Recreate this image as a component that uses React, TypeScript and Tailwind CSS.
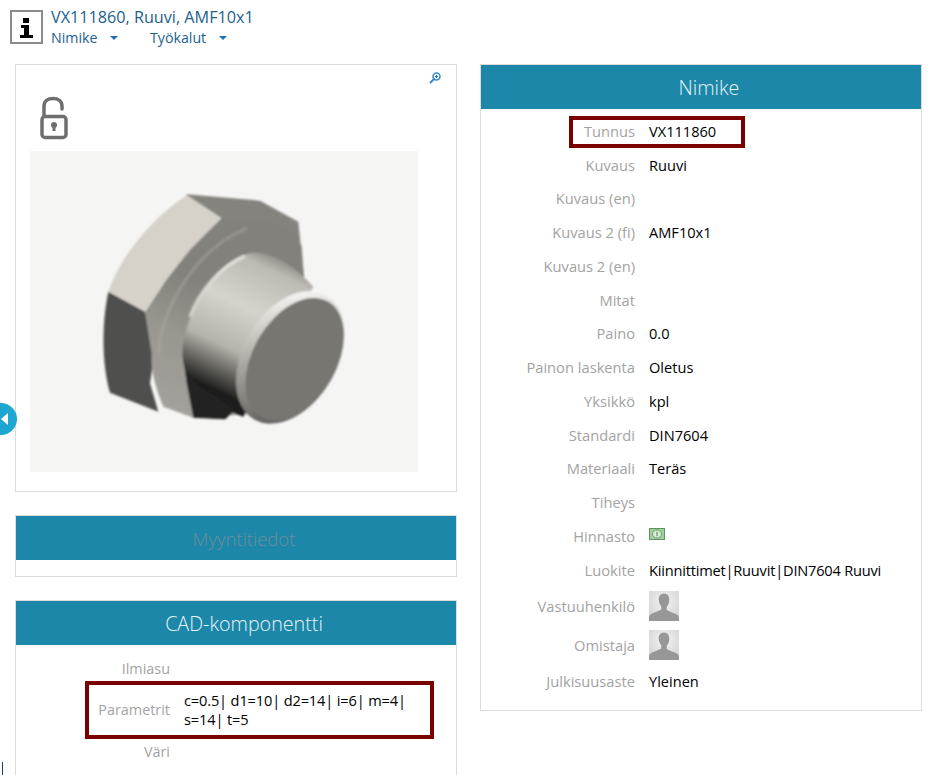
const FONT = "font-['Open_Sans','Noto_Sans',sans-serif]";

const nimikeRows: { label: string; value?: string; kind?: 'money' | 'avatar'; tight?: boolean }[] = [
  { label: 'Tunnus', value: 'VX111860' },
  { label: 'Kuvaus', value: 'Ruuvi' },
  { label: 'Kuvaus (en)' },
  { label: 'Kuvaus 2 (fi)', value: 'AMF10x1' },
  { label: 'Kuvaus 2 (en)' },
  { label: 'Mitat' },
  { label: 'Paino', value: '0.0' },
  { label: 'Painon laskenta', value: 'Oletus' },
  { label: 'Yksikkö', value: 'kpl' },
  { label: 'Standardi', value: 'DIN7604' },
  { label: 'Materiaali', value: 'Teräs' },
  { label: 'Tiheys' },
  { label: 'Hinnasto', kind: 'money' },
  { label: 'Luokite', value: 'Kiinnittimet|Ruuvit|DIN7604 Ruuvi', tight: true },
  { label: 'Vastuuhenkilö', kind: 'avatar' },
  { label: 'Omistaja', kind: 'avatar' },
  { label: 'Julkisuusaste', value: 'Yleinen' },
];

function InfoIcon() {
  return (
    <svg width="33" height="34" viewBox="0 0 33 34" aria-hidden="true">
      <rect x="1" y="1" width="31" height="32" fill="#fff" stroke="#8c8c8c" strokeWidth="2" />
      <rect x="13" y="8" width="6" height="5" fill="#000" />
      <rect x="11" y="15" width="8" height="3" fill="#000" />
      <rect x="14" y="15" width="5" height="11" fill="#000" />
      <rect x="10" y="25" width="13" height="3" fill="#000" />
    </svg>
  );
}

function LockIcon() {
  return (
    <svg width="30" height="44" viewBox="0 0 30 44" fill="none" aria-hidden="true">
      <path d="M5 20V10C5 5 9 2.500 14 2.500s9 2.500 9 7.500v3" stroke="#6e6e6e" strokeWidth="3.500" strokeLinecap="round" />
      <rect x="3" y="20.500" width="24" height="21" rx="3" stroke="#6e6e6e" strokeWidth="3.500" />
      <circle cx="15" cy="29" r="3" fill="#6e6e6e" />
      <rect x="13.500" y="29" width="3" height="6" fill="#6e6e6e" />
    </svg>
  );
}

function ZoomIcon() {
  return (
    <svg width="12" height="12" viewBox="0 0 12 12" fill="none" aria-hidden="true">
      <circle cx="7.500" cy="4.500" r="3.500" stroke="#3b87cf" strokeWidth="1.500" />
      <path d="M5 7L1.500 10.500" stroke="#3b87cf" strokeWidth="2" strokeLinecap="round" />
      <path d="M6 4.500h3M7.500 3v3" stroke="#1f6fb5" strokeWidth="1" />
    </svg>
  );
}

function MoneyIcon() {
  return (
    <svg width="16" height="12" viewBox="0 0 16 12" className="-mt-[3px]" aria-hidden="true">
      <rect x="0.500" y="0.500" width="15" height="11" fill="#a3cfa0" stroke="#5f9460" />
      <ellipse cx="8" cy="6" rx="4.500" ry="4" fill="#d9ecd6" stroke="#6fa370" />
      <rect x="7.400" y="3.800" width="1.200" height="4.400" fill="#5f9460" />
    </svg>
  );
}

function Avatar() {
  return (
    <svg width="30" height="30" viewBox="0 0 30 30" aria-hidden="true">
      <defs>
        <radialGradient id="avatar-bg" cx="50%" cy="35%" r="70%">
          <stop offset="0%" stopColor="#f4f4f4" />
          <stop offset="100%" stopColor="#d2d2d2" />
        </radialGradient>
      </defs>
      <rect width="30" height="30" fill="url(#avatar-bg)" />
      <path
        d="M15 2.500c3.600 0 5.300 2.800 5.300 6.200 0 3-1.100 5.600-2.600 7v3.300c2 1.500 7 2.800 10 4.500 1.300.8 2.300 2 2.300 3.500V30H0v-3.500c0-1.500 1-2.700 2.300-3.500 3-1.700 8-3 10-4.500v-3.300c-1.500-1.400-2.600-4-2.600-7C9.700 5.300 11.400 2.500 15 2.500z"
        fill="#979797"
      />
    </svg>
  );
}

function BoltDrawing() {
  return (
    <svg width="388" height="321" viewBox="0 3 1164 963" aria-hidden="true">
      <defs>
        <linearGradient id="bolt-shank" gradientUnits="userSpaceOnUse" x1="720" y1="310" x2="531" y2="709">
          <stop offset="0" stopColor="#8f8d87" />
          <stop offset="0.1" stopColor="#bdbab3" />
          <stop offset="0.4" stopColor="#d6d3cc" />
          <stop offset="0.7" stopColor="#b5b3ac" />
          <stop offset="0.88" stopColor="#5a5954" />
          <stop offset="1" stopColor="#1d1d1b" />
        </linearGradient>
        <linearGradient id="bolt-washer" gradientUnits="userSpaceOnUse" x1="400" y1="760" x2="560" y2="420">
          <stop offset="0" stopColor="#a3a19b" />
          <stop offset="0.55" stopColor="#98968f" />
          <stop offset="1" stopColor="#83817b" />
        </linearGradient>
        <linearGradient id="bolt-rim" gradientUnits="userSpaceOnUse" x1="640" y1="500" x2="880" y2="800">
          <stop offset="0" stopColor="#f2f0ec" />
          <stop offset="0.35" stopColor="#bdbab4" />
          <stop offset="1" stopColor="#5f5e5a" />
        </linearGradient>
        <filter id="bolt-soft">
          <feGaussianBlur stdDeviation="3" />
        </filter>
        <filter id="bolt-glow">
          <feGaussianBlur stdDeviation="4" />
        </filter>
      </defs>
      <rect y="3" width="1164" height="963" fill="#f5f5f3" />
      <g filter="url(#bolt-soft)">
        <path d="M470 133L690 152 805 215 822 385 600 600 360 600z" fill="#85837d" />
        <path d="M470 135L575 205 480 300 405 395 345 485 235 425C265 335 350 215 470 135z" fill="#d6d2ca" />
        <path d="M235 425L345 485 375 600 360 700 385 785 240 728C215 640 215 520 235 425z" fill="#4f4f4e" />
        <path
          d="M365 610L345 487 405 395 480 300 575 205 640 215C730 205 795 225 815 290L822 385 700 790 490 803 400 770C375 710 362 660 365 610z"
          fill="url(#bolt-washer)"
        />
        <path d="M458 610L470 700 490 803 585 808 640 760 560 600z" fill="#232321" />
        <path
          d="M458 620C455 500 560 330 660 310 720 300 790 345 850 410L640 800C600 790 560 760 520 720 480 685 460 660 458 620z"
          fill="url(#bolt-shank)"
        />
        <path d="M490 800L585 808 610 780 560 740 475 690z" fill="#232321" />
        <ellipse cx="780" cy="622" rx="140" ry="215" transform="rotate(30 780 622)" fill="url(#bolt-rim)" />
        <ellipse cx="794" cy="628" rx="125" ry="200" transform="rotate(30 794 628)" fill="#777671" />
      </g>
      <path d="M480 500C510 420 570 350 645 318" stroke="#f4f2ee" strokeWidth="7" fill="none" filter="url(#bolt-glow)" />
      <path d="M385 610C395 480 490 300 650 235" stroke="#aeaca5" strokeWidth="4" fill="none" filter="url(#bolt-glow)" />
    </svg>
  );
}

function SectionHeader({ title, muted }: { title: string; muted?: boolean }) {
  return (
    <div
      className={`flex h-11 items-center justify-center bg-[#1c87a8] pt-[2px] pl-[16px] font-light ${
        muted ? 'text-[18.500px] text-[#6e8d9a]' : 'text-[19.700px] text-[#e6f3f7]'
      }`}
    >
      {title}
    </div>
  );
}

function Caret() {
  return <div className="ml-[13px] h-0 w-0 border-x-[4px] border-t-[4px] border-x-transparent border-t-[#1f6fb5]" />;
}

function NimikeRow({ row }: { row: (typeof nimikeRows)[number] }) {
  const tall = row.kind === 'avatar';
  return (
    <div className={`flex items-center gap-[14px] leading-[20px] ${tall ? 'h-[39px]' : 'h-[33.750px]'}`}>
      <div className="w-[154px] shrink-0 text-right text-[14.700px] text-[#a3a3a3]">{row.label}</div>
      <div className={`flex-1 text-[14.600px] text-black ${row.tight ? 'tracking-[-0.2px]' : ''}`}>
        {row.kind === 'money' && <MoneyIcon />}
        {row.kind === 'avatar' && <Avatar />}
        {row.value}
      </div>
    </div>
  );
}

export default function App() {
  return (
    <div className={`relative h-[775px] w-[936px] overflow-hidden bg-white ${FONT}`}>
      <header className="flex h-[64px] items-start pt-[10px] pl-[10px]">
        <InfoIcon />
        <div className="ml-[8px] -mt-[4px] text-[#1d5f8e]">
          <div className="text-[16.200px] leading-[22px]">VX111860, Ruuvi, AMF10x1</div>
          <div className="flex text-[14.200px] leading-[20px]">
            <span className="flex w-[99px] items-center">
              Nimike
              <Caret />
            </span>
            <span className="flex items-center">
              Työkalut
              <Caret />
            </span>
          </div>
        </div>
      </header>

      <div className="flex items-start gap-[23px] pl-[15px]">
        <div className="flex w-[442px] flex-col gap-[23px]">
          <section className="relative h-[428px] border border-[#dcdcdc] pt-[31px] pl-[14px]">
            <div className="absolute top-[7px] right-[15px]">
              <ZoomIcon />
            </div>
            <div className="ml-[9px] h-[55px]">
              <LockIcon />
            </div>
            <BoltDrawing />
          </section>

          <section className="h-[62px] border border-[#dcdcdc]">
            <SectionHeader title="Myyntitiedot" muted />
          </section>

          <section className="h-[200px] border border-[#dcdcdc]">
            <SectionHeader title="CAD-komponentti" />
            <div className="flex h-[44px] items-center gap-[14px] pt-[4px] pl-[3px]">
              <div className="w-[151px] shrink-0 text-right text-[14.400px] text-[#a3a3a3]">Ilmiasu</div>
            </div>
            <div className="flex h-[42px] items-center gap-[14px] pl-[3px]">
              <div className="w-[151px] shrink-0 text-right text-[14.400px] text-[#a3a3a3]">Parametrit</div>
              <div className="-mt-[1px] w-[240px] text-[14.600px] leading-[19px] tracking-[-0.15px] text-black">
                c=0.5| d1=10| d2=14| i=6| m=4| s=14| t=5
              </div>
            </div>
            <div className="flex h-[42px] items-center gap-[14px] pl-[3px]">
              <div className="w-[151px] shrink-0 text-right text-[14.400px] text-[#a3a3a3]">Väri</div>
            </div>
          </section>
        </div>

        <section className="h-[647px] w-[442px] border border-[#dcdcdc]">
          <SectionHeader title="Nimike" />
          <div className="pt-[5px]">
            {nimikeRows.map((row) => (
              <NimikeRow key={row.label} row={row} />
            ))}
          </div>
        </section>
      </div>

      {/* annotation boxes drawn over the screenshot */}
      <div className="absolute top-[116px] left-[569px] h-[32px] w-[176px] border-4 border-[#7a0000]" />
      <div className="absolute top-[681px] left-[85px] h-[58px] w-[349px] border-4 border-[#7a0000]" />

      {/* side toggle */}
      <div className="absolute top-[403px] -left-[15px] flex h-[32px] w-[32px] items-center justify-end rounded-full bg-[#1ca6d0] pr-[9px]">
        <div className="h-0 w-0 border-y-[6px] border-r-[7px] border-y-transparent border-r-white" />
      </div>
      <div className="absolute top-[762px] left-[2px] h-[13px] w-px bg-[#1d3f63]" />
    </div>
  );
}
